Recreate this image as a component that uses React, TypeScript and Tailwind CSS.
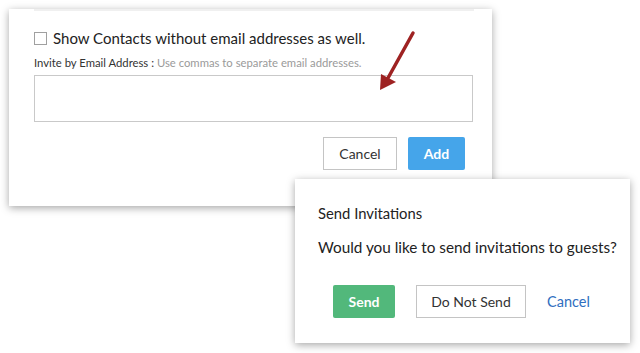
import React from "react";

export default function App() {
  return (
    <div className="w-[640px] h-[353px] bg-white overflow-hidden relative" style={{ fontFamily: "Lato, 'Open Sans', sans-serif" }}>
      <div className="pt-[9px] pl-[9px]">
        <div className="w-[483px] h-[197px] bg-white shadow-[0_2px_8px_rgba(0,0,0,0.35)] relative">
          <div className="ml-[25px] w-[440px] h-[2px] bg-[#f0f0f0]" />
          <div className="pl-[25px] pt-[18px] flex items-center">
            <div className="w-[13px] h-[13px] border border-[#a0a0a0] bg-white" />
            <span className="ml-[6px] text-[15px] leading-[18px] text-[#222]">Show Contacts without email addresses as well.</span>
          </div>
          <div className="pl-[25px] pt-[9px] text-[11.3px] leading-[14px]">
            <span className="text-[#333]">Invite by Email Address : </span>
            <span className="text-[#9a9a9a]">Use commas to separate email addresses.</span>
          </div>
          <div className="ml-[25px] mt-[5px] w-[439px] h-[47px] border border-[#c9c9c9]" />
          <div className="flex justify-end gap-[11px] pr-[27px] mt-[15px]">
            <button className="w-[74px] h-[33px] border border-[#c4c4c4] bg-white text-[14px] text-[#333]">Cancel</button>
            <button className="w-[57px] h-[33px] rounded-[2px] bg-[#45a5ea] text-[14px] font-bold text-white">Add</button>
          </div>
          <svg className="absolute left-[361px] top-[13px]" width="50" height="75" viewBox="370 22 50 75">
            <line x1="413" y1="33" x2="388" y2="78" stroke="#9e2222" strokeWidth="3.5" strokeLinecap="round" />
            <polygon points="380,90 381,74 396,82" fill="#9e2222" />
          </svg>
        </div>
      </div>
      <div className="ml-[295px] mt-[-27px] relative">
        <div className="w-[335px] h-[164px] bg-white shadow-[0_2px_8px_rgba(0,0,0,0.35)]">
          <div className="pl-[23px] pt-[26px] text-[14.8px] leading-[17px] text-[#222]">Send Invitations</div>
          <div className="pl-[23px] pt-[16px] text-[15.3px] leading-[19px] text-[#222]">Would you like to send invitations to guests?</div>
          <div className="flex items-center pl-[38px] pt-[28px]">
            <button className="w-[62px] h-[33px] rounded-[2px] bg-[#52b87b] text-[14px] font-bold text-white">Send</button>
            <button className="ml-[21px] w-[110px] h-[33px] border border-[#c4c4c4] bg-white text-[14px] text-[#333]">Do Not Send</button>
            <span className="ml-[21px] text-[14.5px] text-[#2f6ec0]">Cancel</span>
          </div>
        </div>
      </div>
    </div>
  );
}
